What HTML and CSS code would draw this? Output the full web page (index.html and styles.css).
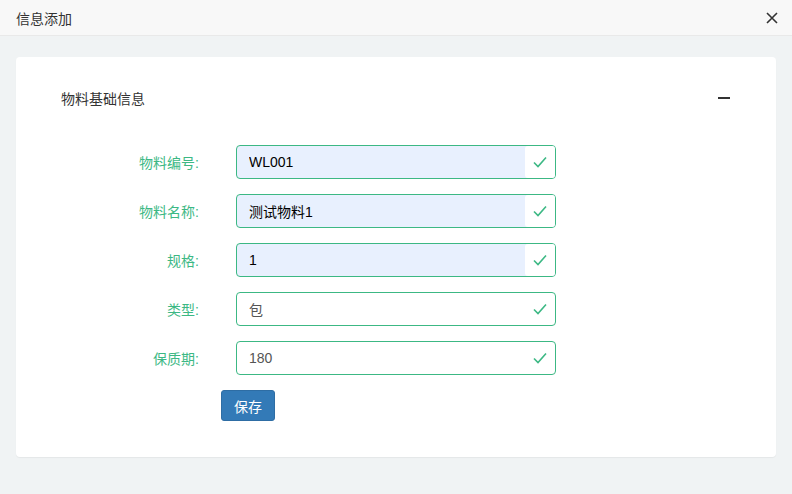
FILE: index.html
```html
<!DOCTYPE html>
<html lang="zh-cn">
<head>
  <meta charset="UTF-8">
  <meta name="viewport" content="width=device-width, initial-scale=1.0">
  <title>信息添加</title>
  <link rel="stylesheet" href="styles.css">
</head>
<body>
  <div class="topbar">
    <span class="topbar-title">信息添加</span>
    <button class="close" title="关闭">
      <svg width="12" height="12" viewBox="0 0 12 12"><path d="M1 1L11 11M11 1L1 11" stroke="#333" stroke-width="1.6" fill="none"/></svg>
    </button>
  </div>

  <div class="content">
    <div class="panel">
      <div class="panel-head">
        <span class="panel-title">物料基础信息</span>
        <span class="collapse"></span>
      </div>

      <form class="form">
        <div class="row">
          <label class="label">物料编号:</label>
          <div class="field autofill">
            <input class="input" type="text" value="WL001">
            <span class="feedback"><svg width="14" height="12" viewBox="0 0 14 12"><path d="M1 6.5L5 10.5L13 1.5" stroke="#3cb884" stroke-width="1.6" fill="none"/></svg></span>
          </div>
        </div>
        <div class="row">
          <label class="label">物料名称:</label>
          <div class="field autofill">
            <input class="input" type="text" value="测试物料1">
            <span class="feedback"><svg width="14" height="12" viewBox="0 0 14 12"><path d="M1 6.5L5 10.5L13 1.5" stroke="#3cb884" stroke-width="1.6" fill="none"/></svg></span>
          </div>
        </div>
        <div class="row">
          <label class="label">规格:</label>
          <div class="field autofill">
            <input class="input" type="text" value="1">
            <span class="feedback"><svg width="14" height="12" viewBox="0 0 14 12"><path d="M1 6.5L5 10.5L13 1.5" stroke="#3cb884" stroke-width="1.6" fill="none"/></svg></span>
          </div>
        </div>
        <div class="row">
          <label class="label">类型:</label>
          <div class="field">
            <input class="input" type="text" value="包">
            <span class="feedback"><svg width="14" height="12" viewBox="0 0 14 12"><path d="M1 6.5L5 10.5L13 1.5" stroke="#3cb884" stroke-width="1.6" fill="none"/></svg></span>
          </div>
        </div>
        <div class="row">
          <label class="label">保质期:</label>
          <div class="field">
            <input class="input" type="text" value="180">
            <span class="feedback"><svg width="14" height="12" viewBox="0 0 14 12"><path d="M1 6.5L5 10.5L13 1.5" stroke="#3cb884" stroke-width="1.6" fill="none"/></svg></span>
          </div>
        </div>
        <div class="actions">
          <button type="button" class="btn-save">保存</button>
        </div>
      </form>
    </div>
  </div>
</body>
</html>
```

FILE: styles.css
```css
body {
  margin: 0;
  font-family: "Liberation Sans", "Noto Sans CJK SC", sans-serif;
  font-size: 14px;
  color: #333;
  background-color: #f0f3f4;
  height: 494px;
  overflow: hidden;
}
.topbar {
  height: 36px;
  background-color: #f8f8f8;
  border-bottom: 1px solid #e9e9e9;
  display: flex;
  align-items: center;
  justify-content: space-between;
  padding: 0 14px 0 16px;
  box-sizing: border-box;
}
.topbar-title {
  font-size: 14px;
  color: #333;
}
.close {
  border: none;
  background: none;
  padding: 0;
  width: 12px;
  height: 12px;
  display: flex;
  cursor: pointer;
}
.content {
  padding: 21px 16px;
}
.panel {
  background-color: #fff;
  border-radius: 4px;
  box-shadow: 0 1px 1px rgba(0, 0, 0, 0.05);
  padding: 29px 46px 36px 45px;
}
.panel-head {
  display: flex;
  justify-content: space-between;
  align-items: center;
  height: 24px;
}
.panel-title {
  font-size: 14px;
  color: #333;
}
.collapse {
  width: 12px;
  height: 2px;
  background-color: #333;
}
.form {
  margin-top: 35px;
}
.row {
  display: flex;
  align-items: center;
  margin-bottom: 15px;
}
.label {
  width: 138px;
  text-align: right;
  color: #3cb884;
  margin-right: 37px;
}
.field {
  position: relative;
  width: 320px;
  height: 34px;
}
.input {
  width: 100%;
  height: 34px;
  box-sizing: border-box;
  border: 1px solid #3cb884;
  border-radius: 4px;
  padding: 0 40px 0 12px;
  font-family: "Liberation Sans", "Noto Sans CJK SC", sans-serif;
  font-size: 14px;
  color: #555;
  background-color: #fff;
  outline: none;
}
.autofill .input {
  background-color: #e8f0fe;
  color: #000;
}
.feedback {
  position: absolute;
  top: 1px;
  right: 1px;
  width: 30px;
  height: 32px;
  border-radius: 3px;
  display: flex;
  align-items: center;
  justify-content: center;
}
.autofill .feedback {
  background-color: #fff;
}
.actions {
  padding-left: 160px;
}
.btn-save {
  width: 54px;
  height: 31px;
  border: 1px solid #2e6da4;
  border-radius: 3px;
  background-color: #337ab7;
  color: #fff;
  font-family: "Liberation Sans", "Noto Sans CJK SC", sans-serif;
  font-size: 14px;
  padding: 0;
  cursor: pointer;
}
```
